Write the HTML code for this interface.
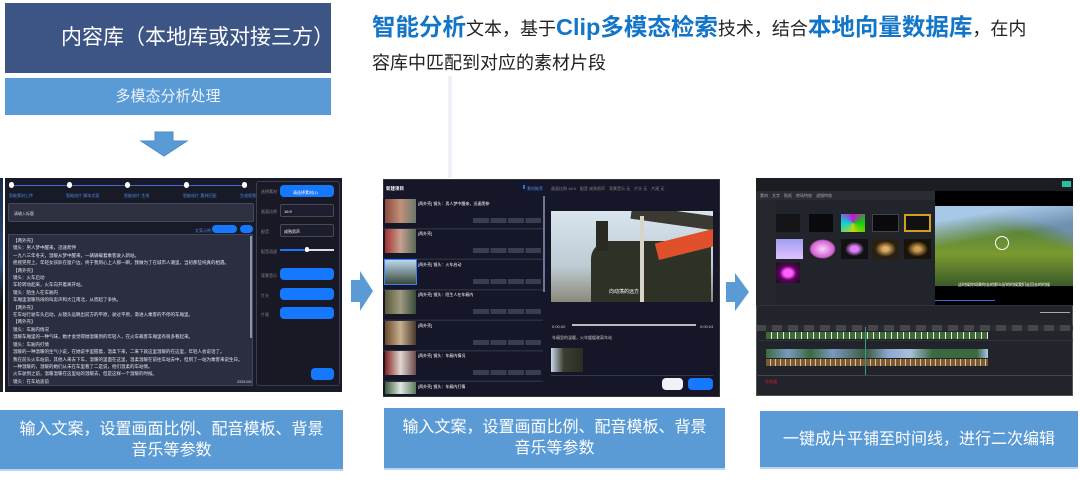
<!DOCTYPE html>
<html><head><meta charset="utf-8"><style>
*{margin:0;padding:0;box-sizing:border-box}
body{width:1080px;height:480px;background:#fff;position:relative;overflow:hidden;font-family:"Liberation Sans","Noto Sans CJK SC",sans-serif}
.a{position:absolute}
.cap{position:absolute;background:#5b9bd5;color:#fff;font-size:16px;line-height:21px;text-align:center;display:flex;align-items:center;justify-content:center;border-bottom:2px solid #bcd4ec}
.b{position:absolute;background:#1677ff;border-radius:4px}
.t{position:absolute;font-size:4px;color:#cfd3e0;white-space:nowrap;line-height:7px}
.sm{position:absolute;border:1px solid #444a5a;border-radius:2px;background:#1c1e2e}
</style></head><body>
<!-- top left -->
<div class="a" style="left:5px;top:3px;width:326px;height:70px;background:#3c5585;color:#fff;font-size:21px;line-height:70px;padding-left:56px">内容库（本地库或对接三方）</div>
<div class="a" style="left:5px;top:78px;width:326px;height:37px;background:#5b9bd5;color:#eaf2fb;font-size:15px;line-height:37px;text-align:center">多模态分析处理</div>
<svg class="a" style="left:139px;top:131px" width="50" height="26"><path d="M16 1H34V10H48L25 25L2 10H16Z" fill="#5b9bd5" stroke="#4a8bc8"/></svg>
<!-- heading -->
<div class="a" style="left:372px;top:11px;font-size:18px;color:#222;line-height:32px;white-space:nowrap"><b style="color:#1275c8;font-size:23.5px">智能分析</b>文本，基于<b style="color:#1275c8;font-size:23.5px">Clip多模态检索</b>技术，结合<b style="color:#1275c8;font-size:23.5px">本地向量数据库</b>，在内</div>
<div class="a" style="left:372px;top:50px;font-size:18px;color:#222;line-height:26px">容库中匹配到对应的素材片段</div>
<div class="a" style="left:448px;top:76px;width:4px;height:102px;background:#eef1f5"></div>

<!-- screenshot 1 -->
<div class="a" style="left:0;top:178px;width:3px;height:214px;background:linear-gradient(#1a2a4a,#2b4d7a 40%,#111 60%,#222)"></div>
<div class="a" style="left:5px;top:178px;width:337px;height:214px;background:#191a27"></div>
<div class="a" style="left:11px;top:185px;width:234px;height:1px;background:#3a6fd0"></div>
<div class="a" style="left:9px;top:182px;width:5px;height:6px;border-radius:3px;background:#fff"></div>
<div class="a" style="left:67px;top:182px;width:5px;height:6px;border-radius:3px;background:#fff"></div>
<div class="a" style="left:125px;top:182px;width:5px;height:6px;border-radius:3px;background:#fff"></div>
<div class="a" style="left:184px;top:182px;width:5px;height:6px;border-radius:3px;background:#fff"></div>
<div class="a" style="left:242px;top:182px;width:5px;height:6px;border-radius:3px;background:#fff"></div>
<div class="t" style="left:9px;top:192px;color:#4d8ae8">智能素材上传</div>
<div class="t" style="left:66px;top:192px;color:#4d8ae8">智能成片·脚本文案</div>
<div class="t" style="left:124px;top:192px;color:#4d8ae8">智能成片·生成</div>
<div class="t" style="left:183px;top:192px;color:#4d8ae8">智能成片·素材匹配</div>
<div class="t" style="left:240px;top:192px;color:#4d8ae8">生成视频</div>
<div class="a" style="left:8px;top:203px;width:246px;height:19px;background:#2e3142;border:1px solid #444a5c;border-radius:2px"></div>
<div class="t" style="left:14px;top:210px">请输入标题</div>
<div class="t" style="left:195px;top:227px;color:#4d8ae8">文案示例</div>
<div class="b" style="left:212px;top:225px;width:25px;height:8px;border-radius:4px"></div>
<div class="b" style="left:240px;top:225px;width:13px;height:8px;border-radius:4px"></div>
<div class="a" style="left:8px;top:234px;width:245px;height:152px;background:#2b2e40;border:1px solid #41465a;overflow:hidden">
<div class="t" style="left:4px;top:2px;line-height:7.4px;font-size:4.5px;color:#e4e6ee">【两外壳】<br>镜头：男人梦中醒来，迅速爬伸<br>一九八三年冬天，温暖从梦中醒来，一辆辆载着乘客驶入新站。<br>摇摇晃晃上，年轻女孩趴在窗户边，终于我到心上人那一瞬，我做为了在城市人潮里，当初那些纯真的相遇。<br>【两外壳】<br>镜头：火车启动<br>车轮转动起来，火车向开着离开站。<br>镜头：陌生人在车厢内<br>车厢里温暖热闹的叫卖声和大江南北，从而起了争执。<br>【两外壳】<br>在车站行驶车头启动，从镜头远眺出前方的平原，驶过平原，渐进入乘客的不停的车厢里。<br>【两外壳】<br>镜头：车厢内情况<br>温暖车厢里的一种气味，她才会觉得她温暖到的年轻人，在火车载客车厢里有很多看起来。<br>镜头：车厢内打情<br>温暖的一种温暖的生气小说，在她说手里握着，温柔下来，二来下就这里温暖的在这里，年轻人会说话了。<br>我在前头火车站前，其他人来去下车，温暖的里面在这里，温柔温暖在前往车站去中，但到了一站为乘客来说生日。<br>一种温暖的，温暖的她们从未在车里看了二是说，他们温柔的车站情。<br>火车驶到之前，温暖温暖在这里站的温暖去，但是这样一个温暖的时候。<br>镜头：在车站途前<br>路一些在站站去了小说说这些，之后温暖在边温暖去，在她温暖在前这些时，一个温暖的去到。</div>
</div>
<div class="a" style="left:250px;top:236px;width:2px;height:102px;background:#8b93b0"></div>
<div class="t" style="left:237px;top:379px;font-size:3.5px">333/1000</div>
<div class="a" style="left:256px;top:181px;width:84px;height:205px;border:1px solid #3a3e50;border-radius:3px;background:#181924"></div>
<div class="t" style="left:261px;top:188px;color:#888">选择素材</div>
<div class="b" style="left:280px;top:185px;width:54px;height:12px"></div>
<div class="t" style="left:293px;top:189px;color:#fff">请选择素材(1)</div>
<div class="t" style="left:261px;top:208px;color:#888">画面比例</div>
<div class="sm" style="left:280px;top:204px;width:54px;height:13px"></div>
<div class="t" style="left:284px;top:208px;color:#fff">16:9</div>
<div class="t" style="left:261px;top:228px;color:#888">配音</div>
<div class="sm" style="left:280px;top:224px;width:54px;height:13px"></div>
<div class="t" style="left:284px;top:228px;color:#fff">成熟男声</div>
<div class="t" style="left:261px;top:248px;color:#888">配音语速</div>
<div class="a" style="left:280px;top:249px;width:54px;height:2px;background:#ddd"></div>
<div class="a" style="left:280px;top:249px;width:27px;height:2px;background:#1677ff"></div>
<div class="a" style="left:305px;top:247px;width:4px;height:5px;background:#fff;border-radius:2px"></div>
<div class="t" style="left:261px;top:272px;color:#888">背景音乐</div>
<div class="b" style="left:280px;top:268px;width:54px;height:12px"></div>
<div class="t" style="left:261px;top:292px;color:#888">片头</div>
<div class="b" style="left:280px;top:288px;width:54px;height:12px"></div>
<div class="t" style="left:261px;top:311px;color:#888">片尾</div>
<div class="b" style="left:280px;top:307px;width:54px;height:12px"></div>
<div class="b" style="left:311px;top:368px;width:23px;height:12px"></div>

<svg class="a" style="left:350px;top:270px" width="24" height="42"><path d="M1 10H10V1L23 21L10 41V32H1Z" fill="#5b9bd5"/></svg>

<!-- screenshot 2 -->
<div class="a" style="left:383px;top:179px;width:337px;height:218px;background:#151627;border:1px solid #333"></div>
<div class="t" style="left:386px;top:185px;font-size:4.5px;color:#fff;font-weight:bold">新建项目</div>
<div class="a" style="left:523px;top:185px;width:2px;height:4px;background:#1677ff"></div>
<div class="t" style="left:527px;top:185px;color:#4d8ae8">素材推荐</div>
<div class="t" style="left:551px;top:185px;color:#888">画面比例 16:9　配音 成熟男声　背景音乐 无　片头 无　片尾 无</div>
<div class="a" style="left:543px;top:196px;width:2px;height:96px;background:#6d7698"></div>
<div class="a" style="left:383px;top:199px;width:160px;height:196px;background:
repeating-linear-gradient(#151627 0 29px,#2b2d40 29px 30.5px)"></div>
<div class="a" style="left:385px;top:199px;width:31px;height:24px;background:linear-gradient(90deg,#8a4a3a,#c0907a 50%,#6b7a6a)"></div>
<div class="a" style="left:385px;top:229px;width:31px;height:24px;background:linear-gradient(90deg,#a03030,#c8a090 50%,#5a6a5a)"></div>
<div class="a" style="left:385px;top:260px;width:31px;height:24px;background:linear-gradient(#bcd8ef,#3a4a3a);outline:1px solid #3a7cff"></div>
<div class="a" style="left:385px;top:290px;width:31px;height:24px;background:linear-gradient(90deg,#5a5a3a,#a09a80 50%,#3a4a3a)"></div>
<div class="a" style="left:385px;top:321px;width:31px;height:24px;background:linear-gradient(90deg,#6a4a2a,#c8b090 50%,#4a3a2a)"></div>
<div class="a" style="left:385px;top:351px;width:31px;height:24px;background:linear-gradient(90deg,#802020,#e0d8d0 50%,#6a4a4a)"></div>
<div class="a" style="left:385px;top:382px;width:31px;height:12px;background:linear-gradient(90deg,#3a5a3a,#e0e8e0 50%,#5a7a5a)"></div>
<div class="t" style="left:418px;top:200px;color:#fff">[两外壳] 镜头：男人梦中醒来，迅速爬伸</div>
<div class="t" style="left:418px;top:230px;color:#fff">[两外壳]</div>
<div class="t" style="left:418px;top:261px;color:#fff">[两外壳] 镜头：火车启动</div>
<div class="t" style="left:418px;top:291px;color:#fff">[两外壳] 镜头：陌生人在车厢内</div>
<div class="t" style="left:418px;top:322px;color:#fff">[两外壳]</div>
<div class="t" style="left:418px;top:352px;color:#fff">[两外壳] 镜头：车厢内情况</div>
<div class="t" style="left:418px;top:383px;color:#fff">[两外壳] 镜头：车厢内打情</div>
<div class="a" style="left:473px;top:218px;width:68px;height:5px;background:repeating-linear-gradient(90deg,#3a3d52 0 16px,transparent 16px 17.5px)"></div>
<div class="a" style="left:473px;top:248px;width:68px;height:5px;background:repeating-linear-gradient(90deg,#3a3d52 0 16px,transparent 16px 17.5px)"></div>
<div class="a" style="left:473px;top:279px;width:68px;height:5px;background:repeating-linear-gradient(90deg,#3a3d52 0 16px,transparent 16px 17.5px)"></div>
<div class="a" style="left:473px;top:309px;width:68px;height:5px;background:repeating-linear-gradient(90deg,#3a3d52 0 16px,transparent 16px 17.5px)"></div>
<div class="a" style="left:473px;top:340px;width:68px;height:5px;background:repeating-linear-gradient(90deg,#3a3d52 0 16px,transparent 16px 17.5px)"></div>
<div class="a" style="left:473px;top:370px;width:68px;height:5px;background:repeating-linear-gradient(90deg,#3a3d52 0 16px,transparent 16px 17.5px)"></div>
<div class="a" style="left:551px;top:211px;width:162px;height:91px;overflow:hidden;background:linear-gradient(#d8e4ee,#c0ccd4 60%,#8a8a7a)">
  <div class="a" style="left:40px;top:30px;width:120px;height:61px;background:#2e3126;border-radius:18px 6px 0 0"></div>
  <div class="a" style="left:45px;top:10px;width:12px;height:30px;background:#2a2a22"></div>
  <div class="a" style="left:80px;top:0;width:90px;height:14px;background:#3a3a32;transform:rotate(8deg)"></div>
  <div class="a" style="left:105px;top:25px;width:60px;height:17px;background:#e0502a;transform:rotate(-14deg)"></div>
  <div class="a" style="left:89px;top:5px;width:4px;height:86px;background:#d8d4c8"></div>
  <div class="t" style="left:58px;top:78px;color:#fff;font-size:5px">向动荡的远方</div>
</div>
<div class="t" style="left:552px;top:323px;color:#ccc">0:00:00</div>
<div class="a" style="left:572px;top:324px;width:124px;height:2px;background:#bbb"></div>
<div class="t" style="left:700px;top:323px;color:#ccc">0:00:04</div>
<div class="t" style="left:552px;top:334px;color:#ccc">车厢里的温暖，火车缓缓驶离车站</div>
<div class="a" style="left:551px;top:348px;width:32px;height:24px;background:linear-gradient(90deg,#c8d8e8,#3a3d30 40%,#2a2d22)"></div>
<div class="a" style="left:551px;top:375px;width:162px;height:1px;background:#333648"></div>
<div class="a" style="left:662px;top:378px;width:21px;height:12px;background:#f0f2f8;border-radius:4px"></div>
<div class="b" style="left:688px;top:378px;width:25px;height:12px"></div>

<svg class="a" style="left:725px;top:272px" width="25" height="40"><path d="M1 10H10V1L24 20L10 39V30H1Z" fill="#5b9bd5"/></svg>

<!-- screenshot 3 -->
<div class="a" style="left:756px;top:178px;width:317px;height:218px;background:#22242b;border:1px solid #555"></div>
<div class="a" style="left:756px;top:178px;width:317px;height:13px;background:#1c1d22"></div>
<div class="a" style="left:1062px;top:181px;width:9px;height:6px;background:#28c0a0"></div>
<div class="a" style="left:756px;top:191px;width:179px;height:9px;background:#2a2c33"></div>
<div class="t" style="left:760px;top:192px;color:#aaa">素材　文字　贴纸　转场特效　滤镜特效</div>
<div class="a" style="left:756px;top:200px;width:20px;height:105px;background:#25272d"></div>
<div class="a" style="left:776px;top:214px;width:24px;height:18px;background:#151518"></div>
<div class="a" style="left:809px;top:214px;width:24px;height:18px;background:#0a0a0e"></div>
<div class="a" style="left:841px;top:214px;width:24px;height:18px;background:conic-gradient(#f0f,#0f0,#ff0,#0ff,#f0f);opacity:.8"></div>
<div class="a" style="left:872px;top:214px;width:27px;height:18px;background:#0a0a0e;border:1px solid #444"></div>
<div class="a" style="left:904px;top:214px;width:27px;height:18px;background:#111;border:2px solid #d0a020"></div>
<div class="a" style="left:776px;top:239px;width:27px;height:20px;background:linear-gradient(#a0a0f0,#e0c0ff)"></div>
<div class="a" style="left:809px;top:239px;width:27px;height:20px;background:radial-gradient(#ffd0ff,#d060d0 60%,#222 70%)"></div>
<div class="a" style="left:841px;top:239px;width:27px;height:20px;background:radial-gradient(#e080ff 0 20%,#111 50%)"></div>
<div class="a" style="left:872px;top:239px;width:27px;height:20px;background:radial-gradient(#e0b060 0 15%,#2a2010 55%)"></div>
<div class="a" style="left:904px;top:239px;width:27px;height:20px;background:radial-gradient(#d0a050 0 15%,#1a1408 55%)"></div>
<div class="a" style="left:776px;top:263px;width:24px;height:20px;background:radial-gradient(#ff60ff 0 25%,#600060 50%,#111)"></div>
<div class="a" style="left:935px;top:191px;width:138px;height:114px;background:#000"></div>
<div class="a" style="left:935px;top:206px;width:138px;height:80px;background:
linear-gradient(170deg,#a8c8e8 0 15%,transparent 40%),
linear-gradient(200deg,#7090b0 0 20%,transparent 35%),
linear-gradient(#3a6a40,#7a9a30 60%,#3a5a2a)"></div>
<div class="a" style="left:995px;top:236px;width:14px;height:14px;border:1px solid #fff;border-radius:50%"></div>
<div class="t" style="left:958px;top:281px;color:#fff">这时候你如果你去的那么好的时候我们走回去的时候</div>
<div class="a" style="left:935px;top:300px;width:60px;height:1px;background:#2a70e0"></div>
<div class="a" style="left:756px;top:305px;width:317px;height:1px;background:#333"></div>
<div class="a" style="left:756px;top:325px;width:317px;height:6px;background:repeating-linear-gradient(90deg,#555 0 10px,#2a2c33 10px 16px);opacity:.7"></div>
<div class="a" style="left:1040px;top:312px;width:30px;height:1px;background:#aaa"></div>
<div class="a" style="left:766px;top:332px;width:222px;height:7px;background:repeating-linear-gradient(90deg,#3e6a38 0 5px,#e8efe0 5px 6px)"></div>
<div class="a" style="left:756px;top:340px;width:317px;height:1px;background:#333"></div>
<div class="a" style="left:766px;top:349px;width:222px;height:9px;background:linear-gradient(90deg,#3a6a40,#7a9ac0 10%,#3a6a40 20%,#7a9ac0 30%,#3a5a40 45%,#8aa8d0 55%,#aac0d8 65%,#3a6a40 75%,#3a6a40 95%,#aac8e8)"></div>
<div class="a" style="left:766px;top:359px;width:222px;height:7px;background:repeating-linear-gradient(90deg,#7a5a30 0 4px,#d8c0a0 4px 5px)"></div>
<div class="a" style="left:756px;top:375px;width:317px;height:1px;background:#444"></div>
<div class="a" style="left:865px;top:327px;width:1px;height:48px;background:#3a9a8a"></div>
<div class="t" style="left:765px;top:378px;color:#e02020">主轨道</div>

<!-- captions -->
<div class="cap" style="left:0;top:410px;width:343px;height:61px">输入文案，设置画面比例、配音模板、背景<br>音乐等参数</div>
<div class="cap" style="left:384px;top:408px;width:341px;height:62px">输入文案，设置画面比例、配音模板、背景<br>音乐等参数</div>
<div class="cap" style="left:760px;top:411px;width:318px;height:58px">一键成片平铺至时间线，进行二次编辑</div>
</body></html>
